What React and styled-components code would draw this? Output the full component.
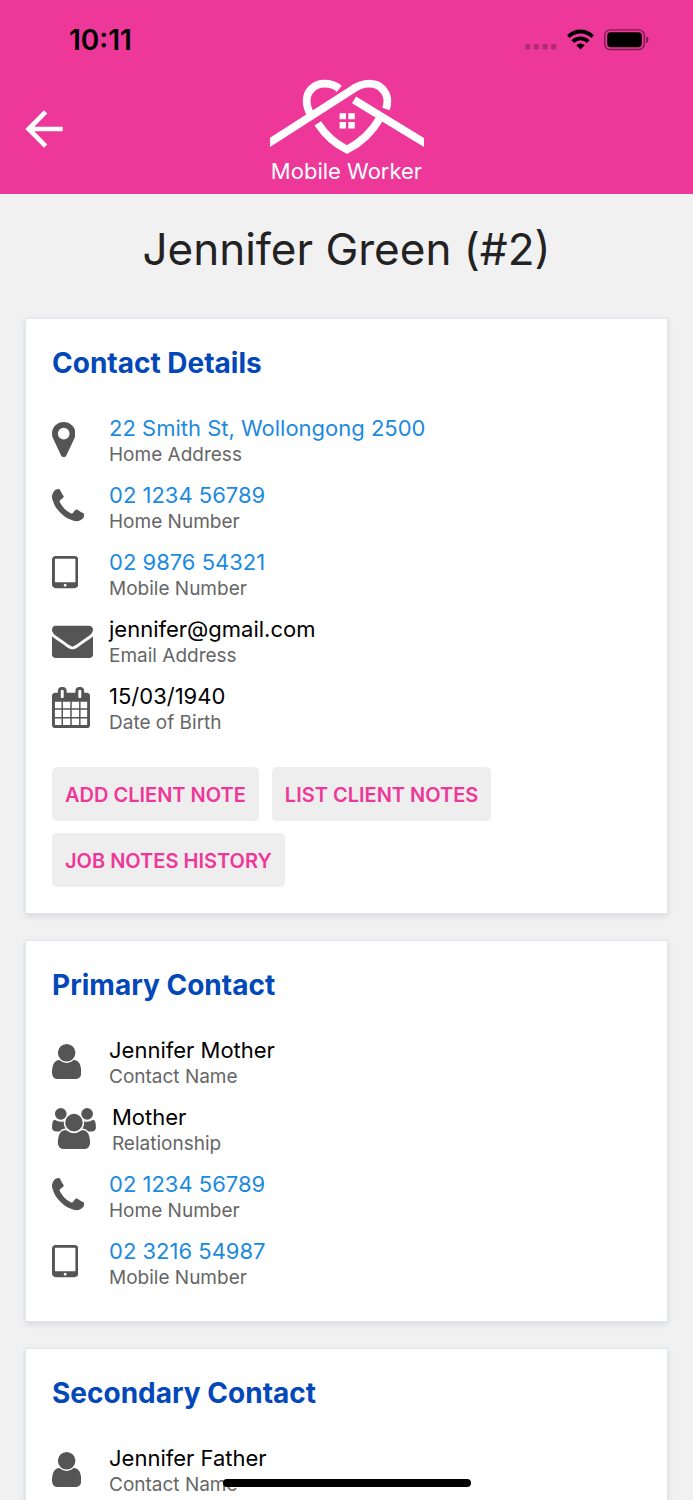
import React from "react";
import styled, { createGlobalStyle } from "styled-components";

const GlobalStyle = createGlobalStyle`
  *, *::before, *::after {
    box-sizing: border-box;
  }

  body {
    margin: 0;
    background: #f1f1f1;
    font-family: Inter, "Liberation Sans", sans-serif;
  }
`;

// viewBox is cropped to the glyph so every icon starts at the left edge
const icons = {
  marker: {
    x: 384,
    width: 1024,
    d: "M1152 640q0-106-75-181t-181-75-181 75-75 181 75 181 181 75 181-75 75-181zm256 0q0 109-33 179l-364 774q-16 33-47.5 52t-67.5 19-67.5-19-46.5-52l-365-774q-33-70-33-179 0-212 150-362t362-150 362 150 150 362z",
  },
  phone: {
    x: 192,
    width: 1408,
    d: "M1600 1240q0 27-10 70.5t-21 68.5q-21 50-122 106-94 51-186 51-27 0-53-3.5t-57.5-12.5-47-14.5-55.5-20.5-49-18q-98-35-175-83-127-79-264-216t-216-264q-48-77-83-175-3-9-18-49t-20.5-55.5-14.5-47-12.5-57.5-3.5-53q0-92 51-186 56-101 106-122 25-11 68.5-21t70.5-10q14 0 21 3 18 6 53 76 11 19 30 54t35 63.5 31 53.5q3 4 17.5 25t21.5 35.5 7 28.5q0 20-28.5 50t-62 55-62 53-28.5 46q0 9 5 22.5t8.5 20.5 14 24 11.5 19q76 137 174 235t235 174q2 1 19 11.5t24 14 20.5 8.5 22.5 5q18 0 46-28.5t53-62 55-62 50-28.5q14 0 28.5 7t35.5 21.5 25 17.5q25 15 53.5 31t63.5 35 54 30q70 35 76 53 3 7 3 21z",
  },
  tablet: {
    x: 320,
    width: 1152,
    d: "M960 1408q0-26-19-45t-45-19-45 19-19 45 19 45 45 19 45-19 19-45zm384-160v-960q0-13-9.5-22.5t-22.5-9.5h-832q-13 0-22.5 9.5t-9.5 22.5v960q0 13 9.5 22.5t22.5 9.5h832q13 0 22.5-9.5t9.5-22.5zm128-960v1088q0 66-47 113t-113 47h-832q-66 0-113-47t-47-113v-1088q0-66 47-113t113-47h832q66 0 113 47t47 113z",
  },
  envelope: {
    x: 0,
    width: 1792,
    d: "M1792 710v794q0 66-47 113t-113 47h-1472q-66 0-113-47t-47-113v-794q44 49 101 87 362 246 497 345 57 42 92.5 65.5t94.5 48 110 24.5h2q51 0 110-24.5t94.5-48 92.5-65.5q170-123 498-345 57-39 100-87zm0-294q0 79-49 151t-122 123q-376 261-468 325-10 7-42.5 31t-54 38.5-52 32.5-57.5 27-50 9h-2q-23 0-50-9t-57.5-27-52-32.5-54-38.5-42.5-31q-91-64-262-182.5t-205-142.5q-62-42-117-115.5t-55-136.5q0-78 41.5-130t118.5-52h1472q65 0 112.5 47t47.5 113z",
  },
  calendar: {
    x: 64,
    width: 1664,
    d: "M192 1664h288v-288h-288v288zm352 0h320v-288h-320v288zm-352-352h288v-320h-288v320zm352 0h320v-320h-320v320zm-352-384h288v-288h-288v288zm736 736h320v-288h-320v288zm-384-736h320v-288h-320v288zm768 736h288v-288h-288v288zm-384-352h320v-320h-320v320zm-352-864v-288q0-13-9.5-22.5t-22.5-9.5h-64q-13 0-22.5 9.5t-9.5 22.5v288q0 13 9.5 22.5t22.5 9.5h64q13 0 22.5-9.5t9.5-22.5zm736 864h288v-320h-288v320zm-384-384h320v-288h-320v288zm384 0h288v-288h-288v288zm32-480v-288q0-13-9.5-22.5t-22.5-9.5h-64q-13 0-22.5 9.5t-9.5 22.5v288q0 13 9.5 22.5t22.5 9.5h64q13 0 22.5-9.5t9.5-22.5zm384-64v1280q0 52-38 90t-90 38h-1408q-52 0-90-38t-38-90v-1280q0-52 38-90t90-38h128v-96q0-66 47-113t113-47h64q66 0 113 47t47 113v96h384v-96q0-66 47-113t113-47h64q66 0 113 47t47 113v96h128q52 0 90 38t38 90z",
  },
  user: {
    x: 256,
    width: 1280,
    d: "M1536 1399q0 109-62.5 187t-150.5 78h-854q-88 0-150.5-78t-62.5-187q0-85 8.5-160.5t31.5-152 58.5-131 94-89 134.5-34.5q131 128 313 128t313-128q76 0 134.5 34.5t94 89 58.5 131 31.5 152 8.5 160.5zm-256-887q0 159-112.5 271.5t-271.5 112.5-271.5-112.5-112.5-271.5 112.5-271.5 271.5-112.5 271.5 112.5 112.5 271.5z",
  },
  users: {
    x: -64,
    width: 1920,
    d: "M529 896q-162 5-265 128h-134q-82 0-138-40.5t-56-118.5q0-353 124-353 6 0 43.5 21t97.5 42.5 119 21.5q67 0 133-23-5 37-5 66 0 139 81 256zm1071 637q0 120-73 189.5t-194 69.5h-874q-121 0-194-69.5t-73-189.5q0-53 3.5-103.5t14-109 26.5-108.5 43-97.5 62-81 85.5-53.5 111.5-20q10 0 43 21.5t73 48 107 48 135 21.5 135-21.5 107-48 73-48 43-21.5q61 0 111.5 20t85.5 53.5 62 81 43 97.5 26.5 108.5 14 109 3.5 103.5zm-1024-1277q0 106-75 181t-181 75-181-75-75-181 75-181 181-75 181 75 75 181zm704 384q0 159-112.5 271.5t-271.5 112.5-271.5-112.5-112.5-271.5 112.5-271.5 271.5-112.5 271.5 112.5 112.5 271.5zm576 225q0 78-56 118.5t-138 40.5h-134q-103-123-265-128 81-117 81-256 0-29-5-66 66 23 133 23 59 0 119-21.5t97.5-42.5 43.5-21q124 0 124 353zm-128-609q0 106-75 181t-181 75-181-75-75-181 75-181 181-75 181 75 75 181z",
  },
};

// Styled Components
const Screen = styled.div`
  height: 100vh;
  display: flex;
  flex-direction: column;
  overflow: hidden;
  background: #f1f1f1;
`;

const Header = styled.header`
  flex: none;
  background: #ee3899;
`;

const StatusBar = styled.div`
  display: flex;
  justify-content: space-between;
  align-items: center;
  height: 79px;
  padding: 0 44px 0 69px;
`;

const Clock = styled.time`
  color: #000;
  font-size: 28px;
  font-weight: 600;
  line-height: 32px;
`;

const StatusIcons = styled.div`
  display: flex;
  align-items: center;
  gap: 10px;

  svg {
    display: block;
  }
`;

const NavBar = styled.div`
  display: grid;
  grid-template-columns: 1fr auto 1fr;
  align-items: center;
  height: 115px;
  padding: 0 16px 8px;
`;

const BackButton = styled.button`
  align-self: start;
  justify-self: start;
  width: 56px;
  height: 56px;
  margin-top: 22px;
  padding: 0;
  border: 0;
  background: none;
  color: #fff;
  cursor: pointer;

  svg {
    display: block;
    width: 100%;
    height: 100%;
  }
`;

const Brand = styled.div`
  display: flex;
  flex-direction: column;
  align-items: center;
  color: #fff;
  font-size: 22px;
  line-height: 32px;

  svg {
    display: block;
    width: 154px;
    height: 76px;
  }
`;

const Content = styled.main`
  flex: 1;
  min-height: 0;
  overflow-y: auto;
  scrollbar-width: none;
  padding: 25px 25px 0;
`;

const PageTitle = styled.h1`
  margin: 0 0 39px;
  color: #222;
  font-size: 44px;
  font-weight: 400;
  line-height: 60px;
  text-align: center;
`;

const Card = styled.section`
  margin-bottom: 26px;
  padding: 26px;
  border: 1px solid #dde6ee;
  background: #fff;
  box-shadow: 0 2px 6px rgba(0, 0, 0, 0.1);
`;

const CardTitle = styled.h2`
  margin: 0 0 34px;
  color: #0348b8;
  font-size: 28px;
  font-weight: 700;
  line-height: 36px;
`;

const DetailList = styled.ul`
  display: flex;
  flex-direction: column;
  gap: 13px;
  margin: 0 0 3px;
  padding: 0;
  list-style: none;
`;

const DetailRow = styled.li`
  display: flex;
  align-items: flex-start;
`;

const IconSlot = styled.span`
  min-width: 41px;
  margin-right: 16px;
  padding-top: 4px;
  color: #555;

  svg {
    display: block;
    height: 41px;
  }
`;

const DetailText = styled.div`
  display: flex;
  flex-direction: column;
`;

const Value = styled.span`
  color: #000;
  font-size: 22px;
  line-height: 26px;
`;

const ValueLink = styled(Value)`
  color: #1c8ae0;
  text-decoration: none;
`;

const Label = styled.span`
  color: #666;
  font-size: 19px;
  line-height: 28px;
`;

const Actions = styled.div`
  display: flex;
  flex-wrap: wrap;
  gap: 12px 13px;
  margin-top: 30px;
`;

const ActionButton = styled.button`
  height: 54px;
  padding: 2px 13px 0;
  border: 0;
  border-radius: 5px;
  background: #eee;
  color: #ee3899;
  font-family: inherit;
  font-size: 20px;
  font-weight: 600;
  text-transform: uppercase;
  cursor: pointer;
`;

const HomeIndicator = styled.div`
  position: fixed;
  left: 50%;
  bottom: 13px;
  width: 248px;
  height: 8px;
  border-radius: 4px;
  background: #000;
  transform: translateX(-50%);
`;

function Icon({ name }) {
  const { x, width, d } = icons[name];
  return (
    <svg viewBox={`${x} 0 ${width} 1792`} fill="currentColor" aria-hidden="true">
      <path d={d} />
    </svg>
  );
}

function Logo() {
  return (
    <svg viewBox="62 40 458 226" fill="none" stroke="#fff" strokeWidth="23" aria-hidden="true">
      <path d="M50 236L306 72C326 58 340 54 357 54C390 54 411 78 411 106Q411 117 407 129" />
      <path d="M186 150Q171 128 171 104C171 76 194 54 224 54Q250 54 268 69" />
      <path d="M312 102L532 236" />
      <path d="M204 172Q238 224 291 250Q354 218 389 156" />
      <path
        d="M269 142h19v18h-19zM295 142h19v18h-19zM269 168h19v19h-19zM295 168h19v19h-19z"
        fill="#fff"
        stroke="none"
      />
    </svg>
  );
}

function Status() {
  return (
    <StatusIcons>
      <svg width="32" height="22" viewBox="0 0 32 22" fill="#000" fillOpacity="0.25">
        <rect x="0" y="15" width="5.4" height="5.4" rx="1.5" />
        <rect x="8.7" y="15" width="5.4" height="5.4" rx="1.5" />
        <rect x="17.4" y="15" width="5.4" height="5.4" rx="1.5" />
        <rect x="26" y="15" width="5.4" height="5.4" rx="1.5" />
      </svg>
      <svg width="27" height="22" viewBox="0 0 27 22">
        <g fill="none" stroke="#000" strokeWidth="3.8">
          <path d="M1.3 7.6A17.2 17.2 0 0 1 25.7 7.6" />
          <path d="M5.8 12.6A10.9 10.9 0 0 1 21.2 12.6" />
        </g>
        <path d="M13.5 20.6L9.3 16.3A6 6 0 0 1 17.7 16.3Z" />
      </svg>
      <svg width="45" height="22" viewBox="0 0 45 22">
        <rect x="0.7" y="0.9" width="39.6" height="19.6" rx="5.5" fill="none" stroke="#000" strokeOpacity="0.5" strokeWidth="1.4" />
        <rect x="3.2" y="3.2" width="34.6" height="15" rx="3.4" />
        <path d="M42 7.2Q44.6 8.2 44.6 10.7T42 14.2Z" fillOpacity="0.5" />
      </svg>
    </StatusIcons>
  );
}

function Detail({ icon, value, label, href }) {
  return (
    <DetailRow>
      <IconSlot>
        <Icon name={icon} />
      </IconSlot>
      <DetailText>
        {href ? (
          <ValueLink as="a" href={href}>
            {value}
          </ValueLink>
        ) : (
          <Value>{value}</Value>
        )}
        <Label>{label}</Label>
      </DetailText>
    </DetailRow>
  );
}

const cards = [
  {
    title: "Contact Details",
    rows: [
      { icon: "marker", value: "22 Smith St, Wollongong 2500", label: "Home Address", href: "#map" },
      { icon: "phone", value: "02 1234 56789", label: "Home Number", href: "tel:02123456789" },
      { icon: "tablet", value: "02 9876 54321", label: "Mobile Number", href: "tel:02987654321" },
      { icon: "envelope", value: "jennifer@gmail.com", label: "Email Address" },
      { icon: "calendar", value: "15/03/1940", label: "Date of Birth" },
    ],
    actions: ["Add Client Note", "List Client Notes", "Job Notes History"],
  },
  {
    title: "Primary Contact",
    rows: [
      { icon: "user", value: "Jennifer Mother", label: "Contact Name" },
      { icon: "users", value: "Mother", label: "Relationship" },
      { icon: "phone", value: "02 1234 56789", label: "Home Number", href: "tel:02123456789" },
      { icon: "tablet", value: "02 3216 54987", label: "Mobile Number", href: "tel:02321654987" },
    ],
  },
  {
    title: "Secondary Contact",
    rows: [{ icon: "user", value: "Jennifer Father", label: "Contact Name" }],
  },
];

// Main component
function App() {
  return (
    <Screen>
      <GlobalStyle />
      <Header>
        <StatusBar>
          <Clock>10:11</Clock>
          <Status />
        </StatusBar>
        <NavBar>
          <BackButton type="button" aria-label="Back">
            <svg viewBox="0 0 24 24" fill="currentColor">
              <path d="M20 11H7.83l5.59-5.59L12 4l-8 8 8 8 1.41-1.41L7.83 13H20v-2z" />
            </svg>
          </BackButton>
          <Brand>
            <Logo />
            Mobile Worker
          </Brand>
        </NavBar>
      </Header>
      <Content>
        <PageTitle>Jennifer Green (#2)</PageTitle>
        {cards.map((card) => (
          <Card key={card.title}>
            <CardTitle>{card.title}</CardTitle>
            <DetailList>
              {card.rows.map((row) => (
                <Detail key={row.label} {...row} />
              ))}
            </DetailList>
            {card.actions && (
              <Actions>
                {card.actions.map((action) => (
                  <ActionButton key={action} type="button">
                    {action}
                  </ActionButton>
                ))}
              </Actions>
            )}
          </Card>
        ))}
      </Content>
      <HomeIndicator />
    </Screen>
  );
}

export default App;
